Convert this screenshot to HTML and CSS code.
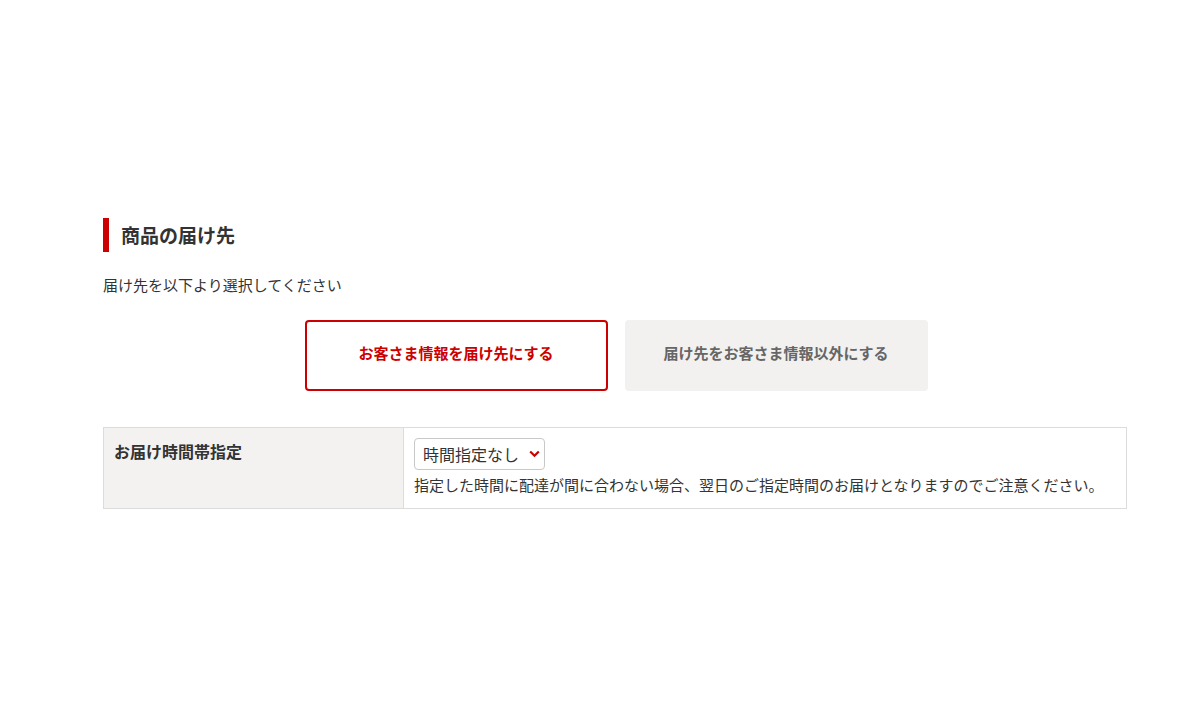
FILE: index.html
```html
<!DOCTYPE html>
<html lang="ja">
<head>
    <meta charset="UTF-8">
    <meta name="viewport" content="width=device-width, initial-scale=1.0">
    <title>商品の届け先</title>
    <link rel="stylesheet" href="styles.css">
</head>
<body>
    <div class="container">
        <h2 class="section-title">商品の届け先</h2>
        <p class="lead">届け先を以下より選択してください</p>

        <div class="choice">
            <button class="choice-btn active">お客さま情報を届け先にする</button>
            <button class="choice-btn">届け先をお客さま情報以外にする</button>
        </div>

        <table class="form-table">
            <tr>
                <th>お届け時間帯指定</th>
                <td>
                    <span class="select-wrap">
                        <select>
                            <option>時間指定なし</option>
                            <option>午前中</option>
                            <option>14時～16時</option>
                        </select>
                        <svg class="chevron" width="11" height="8" viewBox="0 0 11 8">
                            <path d="M1.2 1.5 L5.5 5.8 L9.8 1.5" fill="none" stroke="#cc0000" stroke-width="2.2"/>
                        </svg>
                    </span>
                    <p class="note">指定した時間に配達が間に合わない場合、翌日のご指定時間のお届けとなりますのでご注意ください。</p>
                </td>
            </tr>
        </table>
    </div>
</body>
</html>
```

FILE: styles.css
```css
body {
    margin: 0;
    font-family: "Noto Sans CJK JP", "Noto Sans", sans-serif;
    color: #333;
    background: #fff;
}

.container {
    width: 1024px;
    padding: 218px 0 0 103px;
}

.section-title {
    margin: 0;
    border-left: 6px solid #cc0000;
    padding-left: 12px;
    font-size: 19px;
    line-height: 33px;
    padding-bottom: 1px;
    font-weight: bold;
}

.lead {
    margin: 21px 0 0;
    font-size: 15px;
    line-height: 24px;
}

.choice {
    display: flex;
    justify-content: center;
    gap: 17px;
    margin-top: 23px;
    padding-left: 2px;
}

.choice-btn {
    width: 303px;
    height: 71px;
    border: 2px solid transparent;
    border-radius: 4px;
    background: #f2f1ef;
    color: #666;
    font-family: inherit;
    font-size: 15px;
    line-height: 20px;
    font-weight: bold;
    padding: 0 0 6px;
    cursor: pointer;
}

.choice-btn.active {
    background: #fff;
    border-color: #cc0000;
    color: #cc0000;
}

.form-table {
    width: 100%;
    margin-top: 36px;
    border-collapse: collapse;
}

.form-table th,
.form-table td {
    border: 1px solid #dcdcdc;
    padding: 10px 10px 11px;
    vertical-align: top;
    text-align: left;
}

.form-table th {
    width: 279px;
    background: #f3f2f0;
    font-size: 16px;
    line-height: 26px;
    font-weight: bold;
}

.select-wrap {
    position: relative;
    display: inline-block;
}

.select-wrap select {
    appearance: none;
    -webkit-appearance: none;
    width: 131px;
    height: 32px;
    border: 1px solid #c8c8c8;
    border-radius: 4px;
    background: #fff;
    padding: 0 0 0 8px;
    font-family: inherit;
    font-size: 16px;
    color: #333;
    display: block;
}

.chevron {
    position: absolute;
    right: 5px;
    top: 12px;
    pointer-events: none;
}

.note {
    margin: 3px 0 0;
    font-size: 15px;
    line-height: 24px;
}
```
